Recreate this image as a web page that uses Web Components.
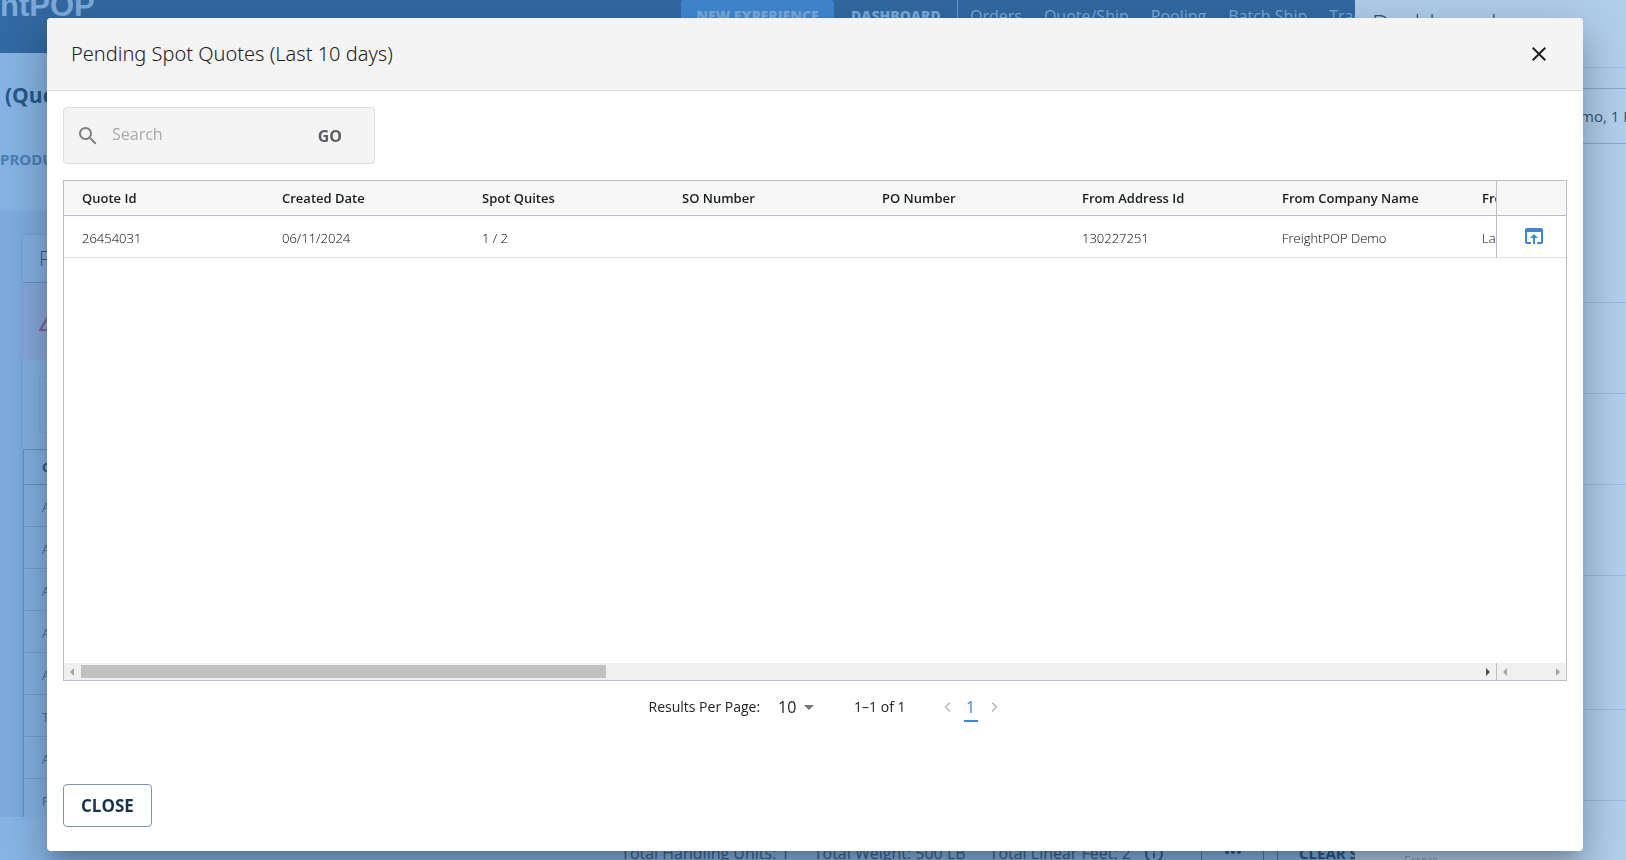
<!DOCTYPE html>
<html lang="en">
<head>
<meta charset="utf-8">
<title>FreightPOP</title>
<style>
    html, body {
        margin: 0;
        height: 100%;
        overflow: hidden;
        font-family: "Open Sans", "Noto Sans", sans-serif;
        font-size: 16px;
        color: #222;
    }
</style>
</head>
<body>
<fp-shell>
    <fp-navbar slot="nav"></fp-navbar>
    <fp-quote-page slot="main"></fp-quote-page>
    <fp-totals-bar slot="footer"></fp-totals-bar>
    <fp-side-panel slot="side"></fp-side-panel>
</fp-shell>
<fp-modal heading="Pending Spot Quotes (Last 10 days)">
    <fp-search></fp-search>
    <fp-quote-grid></fp-quote-grid>
    <fp-pagination></fp-pagination>
</fp-modal>

<script>
class BaseElement extends HTMLElement {

    constructor() {
        super();
        this.shadowroot = this.attachShadow({mode: 'open'});
        this.rendered = false;
    }

    connectedCallback(){
        if(this.rendered) return;
        this.shadowroot.innerHTML = `
            <style>
                *, :host { box-sizing: border-box; }
                button, input, select { font: inherit; color: inherit; background: none; border: 0; margin: 0; padding: 0; }
                button { cursor: pointer; }
                a { color: inherit; text-decoration: none; }
                svg { display: block; }
            </style>
            ${this.template()}
        `;
        this.rendered = true;
    }

    template(){
        return '';
    }

}

class FpShell extends BaseElement {
    template(){
        return `
            <style>
                :host {
                    display: grid;
                    grid-template-columns: minmax(0, 1fr) 271px;
                    height: 100vh;
                    overflow: hidden;
                    background: #7eabdf;
                }
                .page {
                    display: flex;
                    flex-direction: column;
                    min-height: 0;
                }
                .main { flex: 1; min-height: 0; overflow: hidden; }
            </style>
            <div class="page">
                <slot name="nav"></slot>
                <div class="main"><slot name="main"></slot></div>
                <slot name="footer"></slot>
            </div>
            <slot name="side"></slot>
        `;
    }
}

class FpNavbar extends BaseElement {
    template(){
        return `
            <style>
                :host {
                    display: grid;
                    grid-template-columns: 1fr 674px;
                    height: 53px;
                    overflow: hidden;
                    background: linear-gradient(#336aa3, #3169a3);
                    color: #7eabdc;
                }
                .logo {
                    font: bold 31px/12px "Liberation Sans", sans-serif;
                }
                nav {
                    display: flex;
                    align-items: flex-start;
                    line-height: 32px;
                    white-space: nowrap;
                }
                .new {
                    flex: none;
                    width: 153px;
                    height: 40px;
                    background: #4088d2;
                    border-radius: 4px;
                    font-size: 14px;
                    font-weight: 800;
                    line-height: 32px;
                    padding-bottom: 8px;
                }
                .dashboard {
                    flex: none;
                    width: 124px;
                    padding-left: 17px;
                    font-size: 14px;
                    font-weight: 800;
                    border-right: 1px solid #6f9dd0;
                }
                .links { display: flex; gap: 22px; padding-left: 12px; font-size: 16px; }
            </style>
            <div class="logo">ntPOP</div>
            <nav>
                <button class="new" type="button">NEW EXPERIENCE</button>
                <a class="dashboard" href="#dashboard">DASHBOARD</a>
                <div class="links">
                    <a href="#orders">Orders</a>
                    <a href="#quote">Quote/Ship</a>
                    <a href="#pooling">Pooling</a>
                    <a href="#batch">Batch Ship</a>
                    <a href="#track">Trac</a>
                </div>
            </nav>
        `;
    }
}

class FpQuotePage extends BaseElement {
    template(){
        const rows = ['A', 'A', 'A', 'A', 'A', 'T', 'A', 'F'];
        return `
            <style>
                :host { display: block; color: #2a5b8e; }
                .head {
                    height: 158px;
                    background: #86b3e3;
                    border-bottom: 1px solid #80ace0;
                }
                h1 {
                    margin: 0;
                    padding: 26px 0 0 5px;
                    font-size: 21px;
                    line-height: 32px;
                    color: #285786;
                }
                .tab {
                    padding-top: 38px;
                    font-size: 15px;
                    line-height: 20px;
                    font-weight: bold;
                    color: #4a7eb7;
                }
                .card {
                    margin: 24px 23px 0;
                    background: #83b0e1;
                    border-radius: 4px;
                    box-shadow: 0 0 4px #6f9bcf;
                }
                .title {
                    height: 48px;
                    padding: 8px 16px;
                    font-size: 20px;
                    line-height: 32px;
                    font-weight: 300;
                    border-bottom: 1px solid #6390c5;
                }
                .alert {
                    height: 77px;
                    padding: 34px 16px;
                    background: #86a8db;
                    border-radius: 0 0 4px 4px;
                }
                .field {
                    height: 57px;
                    margin: 16px;
                    border: 1px solid #7ba7d8;
                    border-radius: 4px;
                }
                table {
                    width: 100%;
                    border-collapse: collapse;
                    border: 1px solid #6390c5;
                    font-size: 13px;
                    text-align: left;
                }
                th, td { height: 42px; padding: 0 18px; border-bottom: 1px solid #719ed3; }
                th { height: 35px; border-color: #6390c5; }
                td { padding-top: 2px; font-weight: 300; color: #235384; }
            </style>
            <div class="head">
                <h1>(Quo</h1>
                <div class="tab">PRODU</div>
            </div>
            <section class="card">
                <div class="title">F</div>
                <div class="alert">
                    <svg width="16" height="14" viewBox="0 0 16 14"><path d="M8 1.5 15 13H1z" fill="none" stroke="#7b6299" stroke-width="2"/></svg>
                </div>
                <div class="field"></div>
                <table>
                    <thead><tr><th>C</th></tr></thead>
                    <tbody>${rows.map(name => `<tr><td>${name}</td></tr>`).join('')}</tbody>
                </table>
            </section>
        `;
    }
}

class FpTotalsBar extends BaseElement {
    template(){
        return `
            <style>
                :host {
                    display: flex;
                    justify-content: flex-end;
                    height: 43px;
                    padding-top: 26px;
                    overflow: hidden;
                    background: #87b4e4;
                    color: #38618c;
                    font-size: 16px;
                    line-height: 20px;
                    white-space: nowrap;
                }
                .totals { display: flex; gap: 24px; }
                .info {
                    width: 18px;
                    height: 18px;
                    margin: 2px 38px 0 14px;
                }
                .more {
                    width: 63px;
                    border: solid #4d7cae;
                    border-width: 0 1px;
                    text-align: center;
                }
                .more svg { margin: 0 auto; }
                .clear {
                    width: 78px;
                    margin-left: 13px;
                    padding-left: 21px;
                    overflow: hidden;
                    border-left: 1px solid #4d7cae;
                    font-size: 15px;
                    font-weight: bold;
                    text-align: left;
                    color: #2a5a8d;
                }
            </style>
            <div class="totals">
                <span>Total Handling Units: 1</span>
                <span>Total Weight: 500 LB</span>
                <span>Total Linear Feet: 2</span>
            </div>
            <svg class="info" viewBox="0 0 18 18" fill="none" stroke="#38618c" stroke-width="2"><circle cx="9" cy="9" r="8"/><path d="M9 8v5M9 5v2"/></svg>
            <button class="more" type="button" aria-label="More"><svg width="16" height="4" viewBox="0 0 16 4" fill="#2a5a8d"><circle cx="2" cy="2" r="2"/><circle cx="8" cy="2" r="2"/><circle cx="14" cy="2" r="2"/></svg></button>
            <button class="clear" type="button">CLEAR S</button>
        `;
    }
}

class FpSidePanel extends BaseElement {
    template(){
        return `
            <style>
                :host {
                    display: block;
                    overflow: hidden;
                    background: #b1ceec;
                    color: #34536f;
                }
                h2 {
                    margin: 0 0 20px;
                    height: 68px;
                    padding: 5px 17px;
                    font-size: 25px;
                    line-height: 36px;
                    font-weight: 300;
                    border-bottom: 1px solid #9cb9d9;
                }
                .company {
                    height: 56px;
                    padding-left: 225px;
                    border: solid #89a8cb;
                    border-width: 1px 0;
                    font-size: 15px;
                    line-height: 54px;
                    white-space: nowrap;
                }
                .item { height: 91px; border-bottom: 1px solid #9bb8d9; }
                .item.first { height: 159px; }
                .item.tall { height: 134px; }
                .errors { padding: 53px 49px 0; font-size: 12px; line-height: 14px; color: #7d9bba; }
            </style>
            <h2>Dashboard</h2>
            <div class="company">mo, 1 F</div>
            <div class="item first"></div>
            <div class="item"></div>
            <div class="item"></div>
            <div class="item"></div>
            <div class="item tall"></div>
            <div class="item"></div>
            <div class="errors">Errors</div>
        `;
    }
}

class FpModal extends BaseElement {
    template(){
        return `
            <style>
                :host {
                    position: fixed;
                    inset: 18px 43px 9px 47px;
                    display: flex;
                    flex-direction: column;
                    overflow: hidden;
                    background: #fff;
                    border-radius: 4px;
                    box-shadow: 0 11px 15px -7px rgba(0, 0, 0, .2), 0 24px 38px 3px rgba(0, 0, 0, .14), 0 9px 46px 8px rgba(0, 0, 0, .12);
                }
                header {
                    display: flex;
                    align-items: center;
                    justify-content: space-between;
                    height: 73px;
                    padding: 0 32px 0 24px;
                    background: #f4f4f4;
                    border-bottom: 1px solid #dedede;
                }
                h2 {
                    margin: 0;
                    font-family: "Noto Sans", "Open Sans", sans-serif;
                    font-size: 20px;
                    line-height: 32px;
                    font-weight: 300;
                }
                .body {
                    flex: 1;
                    display: flex;
                    flex-direction: column;
                    min-height: 0;
                    padding: 16px;
                }
                footer { padding: 0 16px 24px; }
                .close {
                    height: 43px;
                    padding: 0 17px;
                    border: 1px solid #8093a8;
                    border-radius: 4px;
                    font-size: 17px;
                    font-weight: bold;
                    color: #17324f;
                }
            </style>
            <header>
                <h2>${this.getAttribute('heading')}</h2>
                <button type="button" aria-label="Close dialog">
                    <svg width="24" height="24" viewBox="0 0 24 24" fill="#222"><path d="M19 6.41 17.59 5 12 10.59 6.41 5 5 6.41 10.59 12 5 17.59 6.41 19 12 13.41 17.59 19 19 17.59 13.41 12z"/></svg>
                </button>
            </header>
            <div class="body"><slot></slot></div>
            <footer><button class="close" type="button">CLOSE</button></footer>
        `;
    }
}

class FpSearch extends BaseElement {
    template(){
        return `
            <style>
                :host {
                    display: flex;
                    align-items: center;
                    flex: none;
                    width: 312px;
                    height: 57px;
                    padding: 0 32px 0 12px;
                    background: #f4f4f4;
                    border: 1px solid #dedede;
                    border-radius: 4px;
                }
                label { flex: none; }
                input {
                    flex: 1;
                    min-width: 0;
                    margin-left: 12px;
                    padding-bottom: 4px;
                    line-height: 24px;
                    outline: 0;
                }
                input::placeholder { color: #aaa; opacity: 1; }
                button { font-weight: bold; color: #5c5c62; }
            </style>
            <label for="query" aria-label="Search">
                <svg width="24" height="24" viewBox="0 0 24 24" fill="#828282"><path d="M15.5 14h-.79l-.28-.27C15.41 12.59 16 11.11 16 9.5 16 5.91 13.09 3 9.5 3S3 5.91 3 9.5 5.91 16 9.5 16c1.61 0 3.09-.59 4.23-1.57l.27.28v.79l5 4.99L20.49 19l-4.99-5zm-6 0C7.01 14 5 11.99 5 9.5S7.01 5 9.5 5 14 7.01 14 9.5 11.99 14 9.5 14z"/></svg>
            </label>
            <input id="query" type="text" placeholder="Search">
            <button type="button">GO</button>
        `;
    }
}

class FpQuoteGrid extends BaseElement {

    constructor() {
        super();
        this.columns = ['Quote Id', 'Created Date', 'Spot Quites', 'SO Number', 'PO Number', 'From Address Id', 'From Company Name', 'From'];
        this.items = [
            ['26454031', '06/11/2024', '1 / 2', '', '', '130227251', 'FreightPOP Demo', 'La']
        ];
    }

    template(){
        return `
            <style>
                :host {
                    flex: 1;
                    display: flex;
                    flex-direction: column;
                    justify-content: space-between;
                    min-height: 0;
                    margin-top: 16px;
                    border: 1px solid #babdc8;
                }
                table {
                    width: 100%;
                    table-layout: fixed;
                    border-collapse: separate;
                    border-spacing: 0;
                    font-size: 13px;
                    text-align: left;
                    white-space: nowrap;
                }
                th, td { padding: 0 0 0 18px; overflow: hidden; }
                th {
                    width: 200px;
                    height: 35px;
                    background: #f7f7f7;
                    border-bottom: 1px solid #babdc8;
                    font-weight: 600;
                    color: #181d1f;
                }
                td {
                    height: 42px;
                    border-bottom: 1px solid #dde0e8;
                    padding-top: 2px;
                    font-weight: 300;
                    color: #000;
                }
                th:nth-child(8) { width: auto; }
                th.pinned { width: 70px; }
                .pinned { border-left: 1px solid #babdc8; padding: 0 0 0 25px; }
                td.pinned { padding-top: 2px; }
                .scroll { display: flex; height: 17px; background: #f0f0f0; }
                .bar {
                    display: flex;
                    align-items: center;
                    justify-content: space-between;
                    flex: 1;
                    padding: 0 6px;
                }
                .bar + .bar {
                    flex: 0 0 70px;
                    border-left: 1px solid #babdc8;
                }
                .thumb {
                    width: 37%;
                    height: 13px;
                    margin: 0 auto 0 7px;
                    background: #c1c1c1;
                }
            </style>
            <table>
                <thead>
                    <tr>
                        ${this.columns.map(name => `<th>${name}</th>`).join('')}
                        <th class="pinned"></th>
                    </tr>
                </thead>
                <tbody>
                    ${this.items.map(item => `
                        <tr>
                            ${item.map(value => `<td>${value}</td>`).join('')}
                            <td class="pinned">
                                <button type="button" aria-label="Open quote">
                                    <svg width="24" height="24" viewBox="0 0 24 24" fill="#3d87d2"><path d="M19 4H5c-1.11 0-2 .9-2 2v12c0 1.1.89 2 2 2h4v-2H5V8h14v10h-4v2h4c1.1 0 2-.9 2-2V6c0-1.1-.89-2-2-2zm-7 6-4 4h3v6h2v-6h3l-4-4z"/></svg>
                                </button>
                            </td>
                        </tr>
                    `).join('')}
                </tbody>
            </table>
            <div class="scroll">
                <div class="bar">
                    <svg width="4" height="8" viewBox="0 0 4 8" fill="#a3a3a3"><path d="M4 0v8L0 4z"/></svg>
                    <div class="thumb"></div>
                    <svg width="4" height="8" viewBox="0 0 4 8" fill="#505050"><path d="M0 0v8l4-4z"/></svg>
                </div>
                <div class="bar">
                    <svg width="4" height="8" viewBox="0 0 4 8" fill="#a3a3a3"><path d="M4 0v8L0 4z"/></svg>
                    <svg width="4" height="8" viewBox="0 0 4 8" fill="#a3a3a3"><path d="M0 0v8l4-4z"/></svg>
                </div>
            </div>
        `;
    }
}

class FpPagination extends BaseElement {
    template(){
        return `
            <style>
                :host {
                    display: flex;
                    justify-content: center;
                    align-items: center;
                    flex: none;
                    height: 52px;
                    margin-bottom: 35px;
                    padding-left: 16px;
                    font-size: 14px;
                    line-height: 24px;
                }
                .select {
                    display: flex;
                    align-items: center;
                    margin: 0 40px 0 18px;
                    font-size: 16px;
                }
                select {
                    appearance: none;
                    width: 26px;
                    height: 24px;
                }
                .arrow { pointer-events: none; }
                nav {
                    display: flex;
                    align-items: center;
                    gap: 13px;
                    margin-left: 38px;
                }
                nav a {
                    width: 14px;
                    margin-top: 2px;
                    border-bottom: 2px solid #3d87d2;
                    font-size: 16px;
                    line-height: 26px;
                    text-align: center;
                    color: #3d87d2;
                }
            </style>
            <label for="size">Results Per Page:</label>
            <div class="select">
                <select id="size"><option>10</option></select>
                <svg class="arrow" width="10" height="5" viewBox="0 0 10 5" fill="#757575"><path d="M0 0h10L5 5z"/></svg>
            </div>
            <span>1–1 of 1</span>
            <nav>
                <button type="button" aria-label="Previous page"><svg width="7" height="10" viewBox="0 0 7 10" fill="none" stroke="#b9b9b9" stroke-width="1.5"><path d="M6 .5 1.5 5 6 9.5"/></svg></button>
                <a href="#page-1">1</a>
                <button type="button" aria-label="Next page"><svg width="7" height="10" viewBox="0 0 7 10" fill="none" stroke="#b9b9b9" stroke-width="1.5"><path d="M1 .5 5.5 5 1 9.5"/></svg></button>
            </nav>
        `;
    }
}

customElements.define('fp-shell', FpShell);
customElements.define('fp-navbar', FpNavbar);
customElements.define('fp-quote-page', FpQuotePage);
customElements.define('fp-totals-bar', FpTotalsBar);
customElements.define('fp-side-panel', FpSidePanel);
customElements.define('fp-modal', FpModal);
customElements.define('fp-search', FpSearch);
customElements.define('fp-quote-grid', FpQuoteGrid);
customElements.define('fp-pagination', FpPagination);
</script>
</body>
</html>
